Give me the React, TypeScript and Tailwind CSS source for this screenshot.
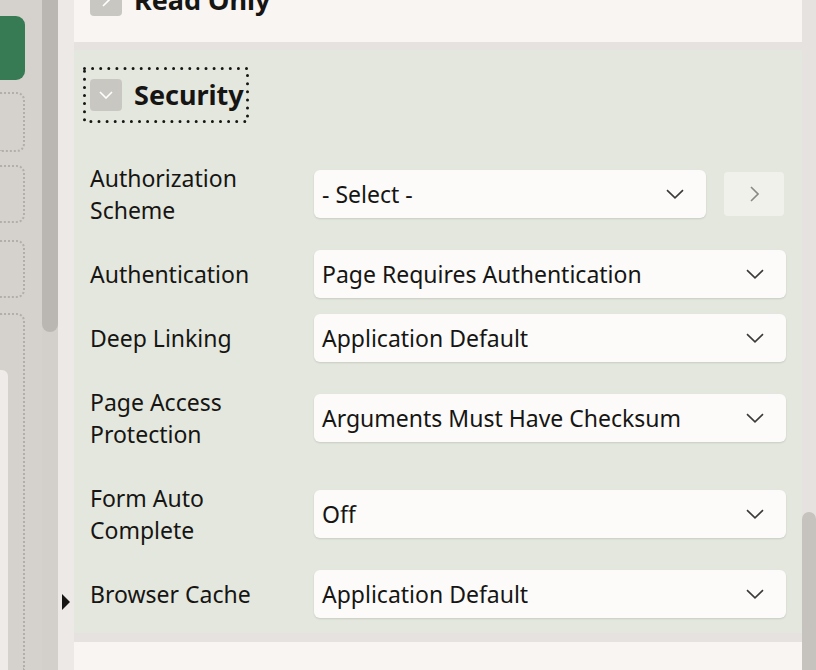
import React from "react";

const font = { fontFamily: '"Noto Sans", "Open Sans", sans-serif' };

function ChevronDown({ className = "" }: { className?: string }) {
  return (
    <svg width="18" height="10" viewBox="0 0 18 10" fill="none" className={className}>
      <path d="M1 1.2 L9 8.8 L17 1.2" stroke="#3b3a38" strokeWidth="1.6" />
    </svg>
  );
}

function SelectBox({ value, className = "" }: { value: string; className?: string }) {
  return (
    <div
      className={`flex h-[48px] items-center justify-between rounded-[6px] bg-[#fcfbf9] pl-[8px] pr-[22px] text-[23px] text-[#161513] shadow-[0_1px_2px_rgba(0,0,0,0.12)] ${className}`}
    >
      <span>{value}</span>
      <ChevronDown />
    </div>
  );
}

type Row = { label: string[]; value: string; mt: string; lookup?: boolean };

const rows: Row[] = [
  { label: ["Authorization", "Scheme"], value: "- Select -", mt: "mt-0", lookup: true },
  { label: ["Authentication"], value: "Page Requires Authentication", mt: "mt-[24px]" },
  { label: ["Deep Linking"], value: "Application Default", mt: "mt-[16px]" },
  { label: ["Page Access", "Protection"], value: "Arguments Must Have Checksum", mt: "mt-[24px]" },
  { label: ["Form Auto", "Complete"], value: "Off", mt: "mt-[32px]" },
  { label: ["Browser Cache"], value: "Application Default", mt: "mt-[24px]" },
];

export default function App() {
  return (
    <div className="flex h-[670px] w-[816px] overflow-hidden bg-[#e6e2df]" style={font}>
      {/* left navigation */}
      <div className="flex w-[42px] flex-col bg-[#d5d1cd]">
        <div className="mt-[16px] h-[64px] w-[25px] rounded-r-[9px] bg-[#367b53]" />
        <div className="mt-[12px] h-[60px] w-[25px] rounded-r-[8px] border-2 border-l-0 border-dotted border-[#b2aeaa]" />
        <div className="mt-[13px] h-[58px] w-[25px] rounded-r-[8px] border-2 border-l-0 border-dotted border-[#b2aeaa]" />
        <div className="mt-[17px] h-[58px] w-[25px] rounded-r-[8px] border-2 border-l-0 border-dotted border-[#b2aeaa]" />
        <div className="mt-[15px] flex w-[25px] flex-1 flex-col rounded-tr-[8px] border-2 border-b-0 border-l-0 border-dotted border-[#b2aeaa]">
          <div className="mt-[55px] w-[8px] flex-1 rounded-tr-[6px] bg-[#efebe8]" />
        </div>
      </div>
      {/* left scrollbar */}
      <div className="w-[16px] bg-[#d3cfcb]">
        <div className="h-[332px] w-[16px] rounded-b-[8px] bg-[#bab6b2]" />
      </div>
      {/* splitter */}
      <div className="flex w-[16px] flex-col bg-[#ece9e6]">
        <svg width="8" height="16" viewBox="0 0 8 16" className="ml-[4px] mt-[594px]">
          <path d="M0 0 L8 8 L0 16 Z" fill="#161513" />
        </svg>
      </div>
      {/* main panel */}
      <div className="flex w-[728px] flex-col">
        <div className="h-[42px] overflow-hidden bg-[#f8f5f2]">
          <div className="-mt-[18px] ml-[16px] flex items-center gap-[12px]">
            <div className="flex h-[32px] w-[32px] shrink-0 items-center justify-center rounded-[4px] bg-[#c9c7c1]">
              <svg width="8" height="14" viewBox="0 0 8 14" fill="none">
                <path d="M1 1 L7 7 L1 13" stroke="#ffffff" strokeWidth="1.6" />
              </svg>
            </div>
            <span className="text-[27px] font-bold leading-[36px] text-[#161513]">Read Only</span>
          </div>
        </div>
        <div className="mt-[8px] flex flex-col bg-[#e3e7dd] pb-[15px] pl-[16px] pr-[16px] pt-[17px]">
          <div className="relative ml-[-7px] flex h-[56px] w-[166px] items-center gap-[12px] px-[7px]">
            <svg className="pointer-events-none absolute inset-0" width="166" height="56" viewBox="0 0 166 56">
              <rect
                x="1.5"
                y="1.5"
                width="163"
                height="53"
                fill="none"
                stroke="#161513"
                strokeWidth="3"
                strokeDasharray="0 8.1"
                strokeLinecap="round"
              />
            </svg>
            <div className="flex h-[32px] w-[32px] shrink-0 items-center justify-center rounded-[4px] bg-[#c9c7c1]">
              <svg width="14" height="8" viewBox="0 0 14 8" fill="none">
                <path d="M1 1 L7 7 L13 1" stroke="#ffffff" strokeWidth="1.6" />
              </svg>
            </div>
            <span className="shrink-0 text-[27px] font-bold leading-[34px] text-[#161513]">Security</span>
          </div>
          <div className="mt-[39px] flex flex-col">
            {rows.map((r) => (
              <div key={r.value + r.label[0]} className={`flex items-center ${r.mt}`}>
                <div className="w-[224px] text-[23px] leading-[32px] text-[#161513]">
                  {r.label.map((l) => (
                    <div key={l}>{l}</div>
                  ))}
                </div>
                {r.lookup ? (
                  <div className="flex flex-1 items-center">
                    <SelectBox value={r.value} className="w-[392px]" />
                    <div className="ml-[18px] flex h-[44px] w-[60px] items-center justify-center rounded-[4px] bg-[#f1f1ec]">
                      <svg width="9" height="16" viewBox="0 0 9 16" fill="none">
                        <path d="M1 1 L8 8 L1 15" stroke="#8a8985" strokeWidth="1.6" />
                      </svg>
                    </div>
                  </div>
                ) : (
                  <SelectBox value={r.value} className="flex-1" />
                )}
              </div>
            ))}
          </div>
        </div>
        <div className="mt-[9px] flex-1 bg-[#f8f5f2]" />
      </div>
      {/* right scrollbar */}
      <div className="w-[14px] bg-[#e6e2df]">
        <div className="mt-[512px] h-[200px] w-[14px] rounded-t-[7px] bg-[#c6c2be]" />
      </div>
    </div>
  );
}
